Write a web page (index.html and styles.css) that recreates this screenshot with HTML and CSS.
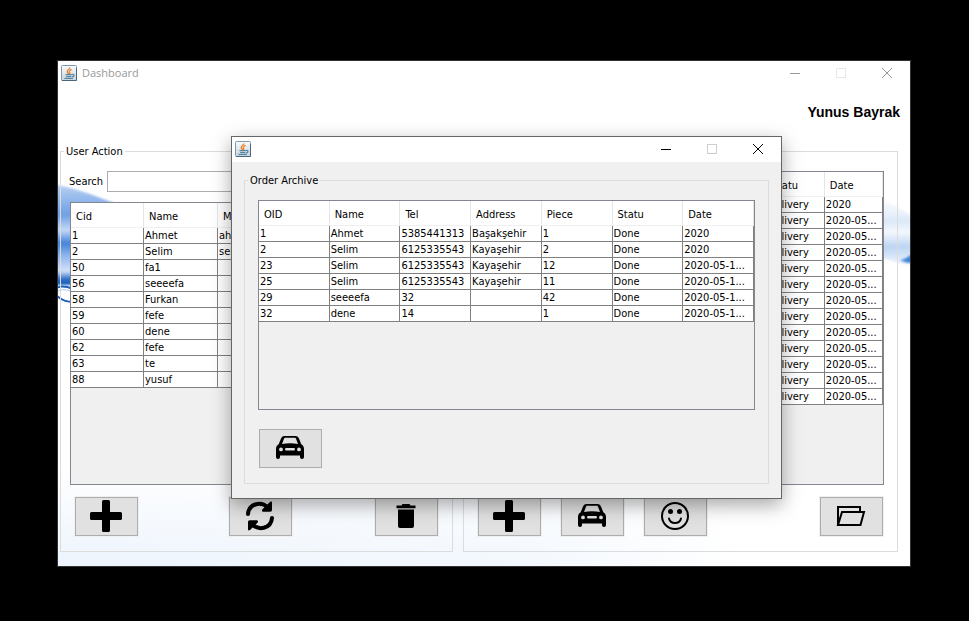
FILE: index.html
```html
<!DOCTYPE html>
<html lang="tr">
<head>
<meta charset="utf-8">
<title>Dashboard</title>
<link rel="stylesheet" href="styles.css">
</head>
<body>
<svg class="defs" aria-hidden="true">
  <defs>
    <linearGradient id="tile" x1="0" y1="0" x2="0" y2="1"><stop offset="0" stop-color="#fafbfc"/><stop offset="1" stop-color="#c6d3de"/></linearGradient>
    <symbol id="java" viewBox="0 0 16 16">
      <rect x=".5" y=".5" width="15" height="15" rx="1" fill="url(#tile)" stroke="#7d99af"/>
      <path d="M1 15.500h14.500V3" fill="none" stroke="#49677f"/>
      <path d="M8.800 2.500c.6 1.500-2.800 2.500-2.600 4.100.1.900 1 1.300 1.200 2.200M10.800 4.500C9 5.200 7.900 6 8.300 7c.3.700.9.900.3 2" fill="none" stroke="#e8822a" stroke-width="1.300"/>
      <path d="M4.500 9.700h6.300M5.200 11.500h5.200M3.500 13.400h8.300M11 9.500c2.600-.6 2.700 1.700.2 2.300" fill="none" stroke="#5382a1" stroke-width="1.200"/>
    </symbol>
    <symbol id="plus" viewBox="0 0 32 32"><path d="M13.500 0h5a1.500 1.500 0 0 1 1.500 1.500V12h10.500a1.500 1.500 0 0 1 1.500 1.500v5a1.500 1.500 0 0 1-1.500 1.500H20v10.500a1.500 1.500 0 0 1-1.500 1.500h-5a1.500 1.500 0 0 1-1.500-1.500V20H1.500A1.500 1.500 0 0 1 0 18.500v-5A1.500 1.500 0 0 1 1.500 12H12V1.500A1.500 1.500 0 0 1 13.500 0z"/></symbol>
    <symbol id="refresh" viewBox="0 0 32 32">
      <path d="M4 14C5 3 18 1 24 8M28 18C27 29 14 31 8 24" fill="none" stroke="#000" stroke-width="4" stroke-linecap="round"/>
      <path d="M28 2.500V10a1.700 1.700 0 0 1-1.700 1.700H19.500c-1.400 0-2-1.400-1-2.400L26 2c.8-.7 2-.5 2 .5zM4 29.500V22a1.700 1.700 0 0 1 1.700-1.700h6.800c1.400 0 2 1.400 1 2.400L6 30c-.8.700-2 .5-2-.5z"/>
    </symbol>
    <symbol id="trash" viewBox="0 0 32 32"><path d="M6.500 5.500h5L12.500 4h7l1 1.500h5v2.700h-19zM8 9.500h16V26a2 2 0 0 1-2 2H10a2 2 0 0 1-2-2z"/></symbol>
    <symbol id="car" viewBox="0 0 32 32">
      <path fill-rule="evenodd" d="M2 17c0-2.600 1.200-4 2.700-4.800L6.800 7C7.600 4.900 8.600 4 10.500 4h11c1.900 0 2.900.9 3.700 3l2.100 5.200C28.800 13 30 14.400 30 17v8a2 2 0 0 1-4 0v-1.500H6V25a2 2 0 0 1-4 0zM8 12c5-1 11-1 16 0l-1.800-4.700C21.800 6.200 21.400 5.800 20.500 5.800h-9c-.9 0-1.300.4-1.700 1.500zM7 15.500a1.900 1.900 0 1 0 0 3.800 1.900 1.900 0 0 0 0-3.800zm18 0a1.900 1.900 0 1 0 0 3.800 1.900 1.900 0 0 0 0-3.800zM12.200 16a1.200 1.200 0 0 0 0 2.400h7.600a1.200 1.200 0 0 0 0-2.400z"/>
    </symbol>
    <symbol id="smile" viewBox="0 0 32 32">
      <circle cx="16" cy="16" r="13" fill="none" stroke="#000" stroke-width="2"/><circle cx="11.500" cy="11.500" r="2.500"/><circle cx="20.500" cy="11.500" r="2.500"/>
      <path d="M10 18.500c1.500 6 10.500 6 12 0" fill="none" stroke="#000" stroke-width="2" stroke-linecap="round"/>
    </symbol>
    <symbol id="folder" viewBox="0 0 32 32"><path d="M3 25V7h22v5M3 25h22.500L29 12H7z" fill="none" stroke="#000" stroke-width="2"/></symbol>
    <linearGradient id="waterL" x1="0" y1="0" x2="0" y2="1"><stop offset="0" stop-color="#b7d0f3"/><stop offset=".3" stop-color="#6f9fe4"/><stop offset=".45" stop-color="#c5d9f7"/><stop offset=".58" stop-color="#4382da"/><stop offset=".7" stop-color="#8db3ec"/><stop offset=".86" stop-color="#d3e1f9"/><stop offset=".94" stop-color="#2f6fc8"/><stop offset="1" stop-color="#1d5fb8"/></linearGradient>
    <linearGradient id="waterR" x1="0" y1="0" x2="0" y2="1"><stop offset="0" stop-color="#fff"/><stop offset=".35" stop-color="#dce8f8"/><stop offset=".5" stop-color="#f4f8fd"/><stop offset=".72" stop-color="#bcd5f3"/><stop offset="1" stop-color="#f4f8fd"/></linearGradient>
    <filter id="soft"><feGaussianBlur stdDeviation="1"/></filter>
  </defs>
</svg>

<div class="window dashboard">
  <svg class="water water-left" viewBox="0 0 110 130" aria-hidden="true">
    <path d="M-4 2C16 4 40 14 76 28H14V102H-4z" fill="url(#waterL)" filter="url(#soft)"/>
    <path d="M-2 105C4 102 10 104 15 106M-2 112C3 117 9 119 15 119" fill="none" stroke="#1d5fb8" stroke-width="2"/>
    <path d="M-2 109C4 105 10 107 15 109" fill="none" stroke="#a9c8f2"/>
  </svg>
  <svg class="water water-right" viewBox="0 0 28 100" aria-hidden="true">
    <path d="M0 0 30 18V68C18 66 8 62 0 60z" fill="url(#waterR)" filter="url(#soft)"/>
    <path d="M18 62c4 2 7 3 12 3V57c-4 0-4 4-12 5z" fill="#3f82da" filter="url(#soft)"/>
  </svg>
  <header class="titlebar inactive">
    <svg class="app-icon"><use href="#java"/></svg>
    <h1 class="title">Dashboard</h1>
    <button class="ctl" aria-label="Minimize"><svg viewBox="0 0 10 10"><path d="M0 5.500h10"/></svg></button>
    <button class="ctl off" aria-label="Maximize"><svg viewBox="0 0 10 10"><path d="M.5.5h9v9h-9z"/></svg></button>
    <button class="ctl" aria-label="Close"><svg viewBox="0 0 10 10"><path d="M0 0l10 10M10 0L0 10"/></svg></button>
  </header>
  <p class="user">Yunus Bayrak</p>
  <main class="panels">
    <fieldset class="group users">
      <legend>User Action</legend>
      <div class="search"><label for="q">Search</label><input id="q" type="text"></div>
      <div class="pane">
        <table>
          <thead><tr><th class="id">Cid</th><th>Name</th><th>Mail</th><th></th><th></th></tr></thead>
          <tbody>
            <tr><td>1</td><td>Ahmet</td><td>ahmet</td><td></td><td></td></tr>
            <tr><td>2</td><td>Selim</td><td>selim</td><td></td><td></td></tr>
            <tr><td>50</td><td>fa1</td><td></td><td></td><td></td></tr>
            <tr><td>56</td><td>seeeefa</td><td></td><td></td><td></td></tr>
            <tr><td>58</td><td>Furkan</td><td></td><td></td><td></td></tr>
            <tr><td>59</td><td>fefe</td><td></td><td></td><td></td></tr>
            <tr><td>60</td><td>dene</td><td></td><td></td><td></td></tr>
            <tr><td>62</td><td>fefe</td><td></td><td></td><td></td></tr>
            <tr><td>63</td><td>te</td><td></td><td></td><td></td></tr>
            <tr><td>88</td><td>yusuf</td><td></td><td></td><td></td></tr>
          </tbody>
        </table>
      </div>
      <div class="user-actions">
        <button class="btn" aria-label="Add user"><svg><use href="#plus"/></svg></button>
        <button class="btn" aria-label="Refresh"><svg><use href="#refresh"/></svg></button>
        <button class="btn" aria-label="Delete user"><svg><use href="#trash"/></svg></button>
      </div>
    </fieldset>
    <fieldset class="group orders">
      <div class="pane">
        <table>
          <thead><tr><th></th><th></th><th></th><th></th><th></th><th>Statu</th><th>Date</th></tr></thead>
          <tbody>
            <tr><td></td><td></td><td></td><td></td><td></td><td>Delivery</td><td>2020</td></tr>
            <tr><td></td><td></td><td></td><td></td><td></td><td>Delivery</td><td>2020-05...</td></tr>
            <tr><td></td><td></td><td></td><td></td><td></td><td>Delivery</td><td>2020-05...</td></tr>
            <tr><td></td><td></td><td></td><td></td><td></td><td>Delivery</td><td>2020-05...</td></tr>
            <tr><td></td><td></td><td></td><td></td><td></td><td>Delivery</td><td>2020-05...</td></tr>
            <tr><td></td><td></td><td></td><td></td><td></td><td>Delivery</td><td>2020-05...</td></tr>
            <tr><td></td><td></td><td></td><td></td><td></td><td>Delivery</td><td>2020-05...</td></tr>
            <tr><td></td><td></td><td></td><td></td><td></td><td>Delivery</td><td>2020-05...</td></tr>
            <tr><td></td><td></td><td></td><td></td><td></td><td>Delivery</td><td>2020-05...</td></tr>
            <tr><td></td><td></td><td></td><td></td><td></td><td>Delivery</td><td>2020-05...</td></tr>
            <tr><td></td><td></td><td></td><td></td><td></td><td>Delivery</td><td>2020-05...</td></tr>
            <tr><td></td><td></td><td></td><td></td><td></td><td>Delivery</td><td>2020-05...</td></tr>
            <tr><td></td><td></td><td></td><td></td><td></td><td>Delivery</td><td>2020-05...</td></tr>
          </tbody>
        </table>
      </div>
      <div class="order-actions">
        <button class="btn" aria-label="Add order"><svg><use href="#plus"/></svg></button>
        <button class="btn" aria-label="Deliver"><svg><use href="#car"/></svg></button>
        <button class="btn" aria-label="Done"><svg><use href="#smile"/></svg></button>
        <button class="btn last" aria-label="Archive"><svg><use href="#folder"/></svg></button>
      </div>
    </fieldset>
  </main>

  <section class="window dialog" role="dialog" aria-label="Order Archive">
    <header class="titlebar">
      <svg class="app-icon"><use href="#java"/></svg>
      <span class="title"></span>
      <button class="ctl" aria-label="Minimize"><svg viewBox="0 0 10 10"><path d="M0 5.500h10"/></svg></button>
      <button class="ctl off" aria-label="Maximize"><svg viewBox="0 0 10 10"><path d="M.5.5h9v9h-9z"/></svg></button>
      <button class="ctl" aria-label="Close"><svg viewBox="0 0 10 10"><path d="M0 0l10 10M10 0L0 10"/></svg></button>
    </header>
    <div class="dialog-body">
      <fieldset class="group archive">
        <legend>Order Archive</legend>
        <div class="pane">
          <table>
            <thead><tr><th>OID</th><th>Name</th><th>Tel</th><th>Address</th><th>Piece</th><th>Statu</th><th>Date</th></tr></thead>
            <tbody>
              <tr><td>1</td><td>Ahmet</td><td>5385441313</td><td>Başakşehir</td><td>1</td><td>Done</td><td>2020</td></tr>
              <tr><td>2</td><td>Selim</td><td>6125335543</td><td>Kayaşehir</td><td>2</td><td>Done</td><td>2020</td></tr>
              <tr><td>23</td><td>Selim</td><td>6125335543</td><td>Kayaşehir</td><td>12</td><td>Done</td><td>2020-05-1...</td></tr>
              <tr><td>25</td><td>Selim</td><td>6125335543</td><td>Kayaşehir</td><td>11</td><td>Done</td><td>2020-05-1...</td></tr>
              <tr><td>29</td><td>seeeefa</td><td>32</td><td></td><td>42</td><td>Done</td><td>2020-05-1...</td></tr>
              <tr><td>32</td><td>dene</td><td>14</td><td></td><td>1</td><td>Done</td><td>2020-05-1...</td></tr>
            </tbody>
          </table>
        </div>
        <button class="btn" aria-label="Deliver"><svg><use href="#car"/></svg></button>
      </fieldset>
    </div>
  </section>
</div>
</body>
</html>
```
FILE: styles.css
```css
* { box-sizing: border-box; }

body {
  margin: 0;
  min-height: 100vh;
  padding: 60px 58px 54px 57px;
  display: flex;
  background: #000;
  color: #000;
  font: 11px/15px "DejaVu Sans Condensed", Tahoma, sans-serif;
}

.defs { position: absolute; width: 0; height: 0; }

.window { display: flex; flex-direction: column; border: 1px solid #333; }

.dashboard {
  position: relative;
  flex: 1;
  background: linear-gradient(#fff 0 80%, transparent), linear-gradient(90deg, #edf4fd, #f3f8fe 55%, #fff 80%);
}

.water { position: absolute; overflow: hidden; }
.water-left { left: 0; top: 122px; width: 110px; height: 130px; }
.water-right { right: 0; top: 137px; width: 28px; height: 100px; }

/* Title bars */
.titlebar { display: flex; align-items: flex-start; height: 24px; padding-left: 3px; background: #fff; }
.app-icon { width: 16px; height: 16px; flex: none; margin-top: 4px; }
.title { flex: 1; margin: 4px 0 0 5px; font: 11px/16px "Open Sans", sans-serif; color: #999; }
.ctl {
  display: flex;
  align-items: center;
  justify-content: center;
  width: 46px;
  height: 24px;
  padding: 0;
  border: 0;
  background: none;
}
.ctl svg { width: 10px; height: 10px; overflow: visible; fill: none; stroke: #000; }
.ctl.off svg { stroke: #ccc; }
.inactive .ctl svg { stroke: #999; }
.inactive .ctl.off svg { stroke: #e8e8e8; }

.user { position: relative; margin: 0; padding: 18px 10px 23px; text-align: right; font: bold 14px/18px "Liberation Sans", Arial, sans-serif; }

/* Titled groups */
.panels {
  position: relative;
  flex: 1;
  display: grid;
  grid-template-columns: 393fr 435fr;
  gap: 10px;
  padding: 0 12px 14px 2px;
}
.group { display: flex; flex-direction: column; min-width: 0; margin: 0; border: 1px solid #dcdcdc; }
.group legend { margin-left: calc(3px - var(--inset)); padding: 0 2px; height: 14px; line-height: 16px; }
.users { --inset: 9px; padding: 13px 11px 15px var(--inset); }
.orders { margin-top: 7px; padding: 19px 13px 15px 11px; }
.archive { --inset: 13px; padding: 13px var(--inset) 15px; }

.search { display: flex; align-items: center; gap: 4px; margin: 0 0 10px -1px; }
.search input { flex: 1; min-width: 0; height: 21px; padding: 0 4px; border: 1px solid #abadb3; border-radius: 0; background: #fff; font: inherit; }

/* Tables */
.pane { flex: 1; border: 1px solid #828790; background: #f0f0f0; }
.users .pane { min-height: 283px; }
.archive .pane { min-height: 210px; }
table { width: 100%; table-layout: fixed; border-collapse: separate; border-spacing: 0; }
th { height: 25px; padding: 3px 0 0 5px; border-right: 1px solid #e5e5e5; border-bottom: 1px solid #f0f0f0; background: #fff; text-align: left; font-weight: normal; }
th.id { width: 73px; }
td { height: 16px; padding: 0 0 0 1px; border-right: 1px solid #808080; border-bottom: 1px solid #808080; background: #fff; white-space: nowrap; overflow: hidden; }

/* Buttons */
.btn {
  display: flex;
  align-items: center;
  justify-content: center;
  width: 63px;
  height: 39px;
  padding: 0 1px 1px 0;
  border: 1px solid #adadad;
  background: #e1e1e1;
  box-shadow: 0 0 0 1px #f0f0f0;
}
.btn svg { width: 32px; height: 32px; }
.user-actions { display: grid; grid-template-columns: 154fr 146fr 63px; margin-top: 12px; padding: 0 3px 0 5px; }
.order-actions { display: flex; gap: 20px; margin-top: 12px; padding: 0 1px 0 3px; }
.order-actions .last { margin-left: auto; }
.archive .btn { margin: 19px 0 0 1px; }

/* Floating archive window */
.dialog {
  position: absolute;
  top: 75px;
  left: 173px;
  right: 128px;
  border-color: #666;
  background: #f0f0f0;
  box-shadow: 0 6px 18px rgba(0, 0, 0, .35);
}
.dialog .titlebar { height: 25px; }
.dialog-body { padding: 11px 12px 14px; }
```
